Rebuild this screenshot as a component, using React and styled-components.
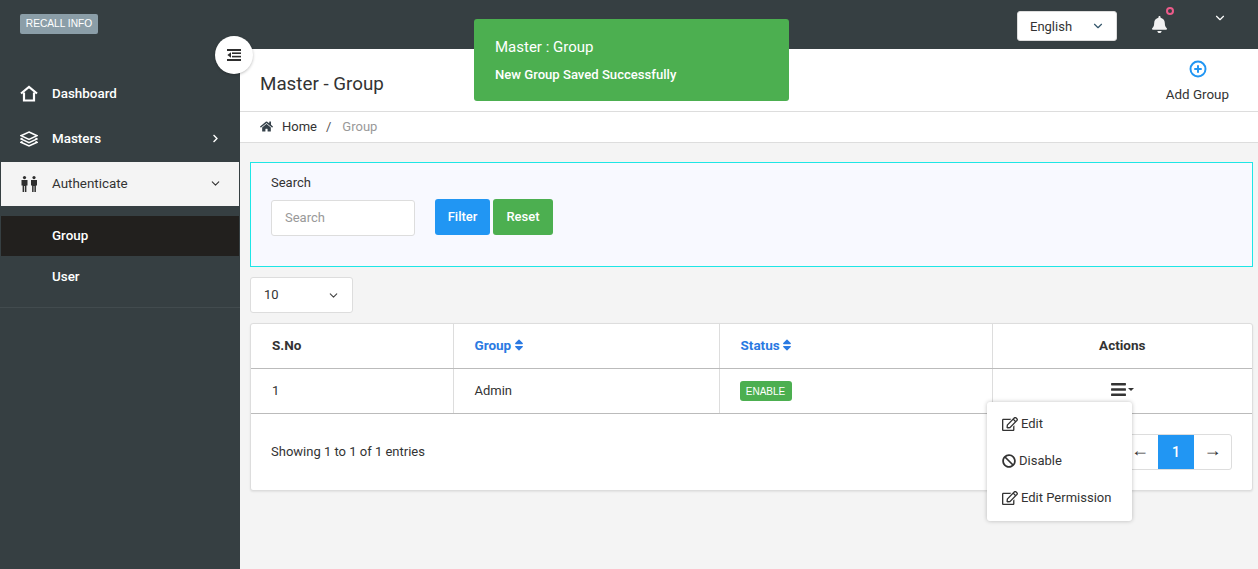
import styled, { createGlobalStyle } from "styled-components"
import { FaBan, FaBars, FaBell, FaChevronRight, FaHome, FaRegEdit, FaSort } from "react-icons/fa"
import { FiChevronDown, FiPlusCircle } from "react-icons/fi"

const HomeIcon = () => (
    <svg width="18" height="17" viewBox="0 0 18 17" fill="none" stroke="#fff" strokeWidth="2.2">
        <path d="M1 8.5 9 2l8 6.5" />
        <path d="M4 7.5V15.5H14V7.5" />
    </svg>
)

const LayersIcon = () => (
    <svg width="18" height="16" viewBox="0 0 18 16" fill="none" stroke="#fff" strokeWidth="1.5">
        <path d="M9 1 17 4.7 9 8.4 1 4.7Z" />
        <path d="M2.5 7.2 1 8 9 11.7 17 8 15.5 7.2" />
        <path d="M2.5 10.5 1 11.3 9 15 17 11.3 15.5 10.5" />
    </svg>
)

const PeopleIcon = () => (
    <svg width="17" height="16" viewBox="0 0 17 16" fill="#2e2e2e">
        <circle cx="3.5" cy="1.6" r="1.6" />
        <path d="M0.5 4H6.5V9.5H5.4V16H3.9V10H3.1V16H1.6V9.5H0.5Z" />
        <circle cx="13" cy="1.6" r="1.6" />
        <path d="M10 4H16V9.5H14.9V16H13.4V10H12.6V16H11.1V9.5H10Z" />
    </svg>
)

const CollapseIcon = () => (
    <svg width="14" height="12" viewBox="0 0 14 12" fill="#2e2e2e">
        <rect x="0" y="0" width="14" height="2" />
        <rect x="5" y="3.4" width="9" height="1.6" />
        <rect x="5" y="6.8" width="9" height="1.6" />
        <rect x="0" y="10" width="14" height="2" />
        <path d="M4 3.2V8.8L0.4 6Z" />
    </svg>
)

const App = () => {
    return (
        <Page>
            <GlobalStyle />
            <Sidebar>
                <Brand>
                    <BrandTag>RECALL INFO</BrandTag>
                </Brand>
                <Nav>
                    <NavItem>
                        <NavIcon><HomeIcon /></NavIcon>
                        Dashboard
                    </NavItem>
                    <NavItem>
                        <NavIcon><LayersIcon /></NavIcon>
                        Masters
                        <NavArrow><FaChevronRight size={9} /></NavArrow>
                    </NavItem>
                    <NavItem $open>
                        <NavIcon><PeopleIcon /></NavIcon>
                        Authenticate
                        <NavArrow $open><FiChevronDown size={13} /></NavArrow>
                    </NavItem>
                    <SubNav>
                        <SubItem $active>Group</SubItem>
                        <SubItem>User</SubItem>
                    </SubNav>
                </Nav>
            </Sidebar>

            <Main>
                <TopBar>
                    <LangSelect>
                        English
                        <FiChevronDown size={14} color="#34566b" />
                    </LangSelect>
                    <BellWrap>
                        <FaBell size={17} color="#f1f1f1" />
                        <BellDot />
                    </BellWrap>
                    <UserCaret><FiChevronDown size={14} color="#fff" /></UserCaret>
                </TopBar>

                <PageHead>
                    <PageTitle>Master - Group</PageTitle>
                    <AddLink>
                        <FiPlusCircle size={18} color="#2196f3" strokeWidth={2.6} />
                        <span>Add Group</span>
                    </AddLink>
                </PageHead>

                <Breadcrumb>
                    <FaHome size={13} color="#36424a" />
                    <span>Home</span>
                    <span className="sep">/</span>
                    <span className="current">Group</span>
                </Breadcrumb>

                <Content>
                    <FilterCard>
                        <Field>
                            <label>Search</label>
                            <SearchInput placeholder="Search" />
                        </Field>
                        <Btn $bg="#2196f3" $w="55px">Filter</Btn>
                        <Btn $bg="#4caf50" $w="60px">Reset</Btn>
                    </FilterCard>

                    <PageSize>
                        <span>10</span>
                        <FiChevronDown size={13} color="#444" />
                    </PageSize>

                    <TableCard>
                        <Table>
                            <colgroup>
                                <col style={{ width: 202 }} />
                                <col style={{ width: 266 }} />
                                <col style={{ width: 273 }} />
                                <col />
                            </colgroup>
                            <thead>
                                <tr>
                                    <Th>S.No</Th>
                                    <Th $link>Group <FaSort size={14} /></Th>
                                    <Th $link>Status <FaSort size={14} /></Th>
                                    <Th $center>Actions</Th>
                                </tr>
                            </thead>
                            <tbody>
                                <tr>
                                    <Td>1</Td>
                                    <Td>Admin</Td>
                                    <Td><Badge>ENABLE</Badge></Td>
                                    <Td $center>
                                        <ActionToggle>
                                            <FaBars size={17} />
                                            <Caret />
                                        </ActionToggle>
                                    </Td>
                                </tr>
                            </tbody>
                        </Table>
                        <TableFoot>
                            <span>Showing 1 to 1 of 1 entries</span>
                            <Pager>
                                <PageBtn>←</PageBtn>
                                <PageBtn $active>1</PageBtn>
                                <PageBtn>→</PageBtn>
                            </Pager>
                        </TableFoot>
                    </TableCard>
                </Content>
            </Main>

            <ToggleBtn><CollapseIcon /></ToggleBtn>

            <Toast>
                <h4>Master : Group</h4>
                <p>New Group Saved Successfully</p>
            </Toast>

            <ActionMenu>
                <MenuItem><FaRegEdit size={16} /> Edit</MenuItem>
                <MenuItem><FaBan size={14} /> Disable</MenuItem>
                <MenuItem><FaRegEdit size={16} /> Edit Permission</MenuItem>
            </ActionMenu>
        </Page>
    )
}

export default App

const GlobalStyle = createGlobalStyle`
    html, body {
        margin: 0;
        padding: 0;
        height: 100%;
        overflow: hidden;
    }

    body {
        font-family: Roboto, "Liberation Sans", Arial, sans-serif;
        font-size: 13px;
        color: #333;
        background: #f4f4f4;
    }

    * {
        box-sizing: border-box;
    }
`

const Page = styled.div`
    position: relative;
    display: flex;
    width: 1258px;
    height: 569px;
    overflow: hidden;
`

const Sidebar = styled.aside`
    flex: 0 0 240px;
    background: #363f42;
`

const Brand = styled.div`
    height: 71px;
    padding: 14px 20px 0;
`

const BrandTag = styled.div`
    display: inline-block;
    width: 78px;
    height: 20px;
    line-height: 20px;
    text-align: center;
    font-family: "Liberation Sans", Arial, sans-serif;
    font-size: 10.2px;
    color: #fff;
    background: #8b9ea8;
    border-radius: 2px;
`

const Nav = styled.nav`
    display: flex;
    flex-direction: column;
    border-bottom: 1px solid #424b4e;
    padding-bottom: 9px;
`

const NavItem = styled.div`
    display: flex;
    align-items: center;
    height: ${(p) => (p.$open ? "44px" : "45px")};
    margin: ${(p) => (p.$open ? "1px 1px 0" : "0 1px")};
    padding-left: 19px;
    padding-bottom: ${(p) => (p.$open ? "1px" : "0")};
    font-size: 13.4px;
    font-weight: ${(p) => (p.$open ? 400 : 500)};
    color: ${(p) => (p.$open ? "#333" : "#fff")};
    background: ${(p) => (p.$open ? "#f4f4f4" : "transparent")};
`

const NavIcon = styled.span`
    display: flex;
    justify-content: center;
    align-items: center;
    width: 18px;
    margin-right: 14px;
`

const NavArrow = styled.span`
    display: flex;
    margin-left: auto;
    margin-right: ${(p) => (p.$open ? "17px" : "19px")};
`

const SubNav = styled.div`
    display: flex;
    flex-direction: column;
    margin-top: 10px;
`

const SubItem = styled.div`
    display: flex;
    align-items: center;
    height: 40px;
    margin: 0 1px 1px;
    padding-left: 51px;
    padding-bottom: 2px;
    font-size: 13.4px;
    font-weight: 500;
    color: #fff;
    background: ${(p) => (p.$active ? "#22201e" : "transparent")};
`

const Main = styled.main`
    flex: 1;
    display: flex;
    flex-direction: column;
    min-width: 0;
`

const TopBar = styled.header`
    display: flex;
    align-items: center;
    justify-content: flex-end;
    height: 49px;
    background: #363f42;
    padding: 3px 31px 0 0;
`

const LangSelect = styled.div`
    display: flex;
    align-items: center;
    justify-content: space-between;
    width: 100px;
    height: 30px;
    margin-right: 1px;
    padding: 0 11px 0 12px;
    color: #333;
    background: #fff;
    border: 1px solid #ddd;
    border-radius: 3px;
`

const BellWrap = styled.div`
    position: relative;
    display: flex;
    margin-left: 33px;
    margin-bottom: 4px;
`

const BellDot = styled.span`
    position: absolute;
    top: -9px;
    left: 15px;
    width: 8px;
    height: 8px;
    border: 2px solid #ec5b8a;
    border-radius: 50%;
`

const UserCaret = styled.div`
    display: flex;
    margin-left: 45px;
    margin-bottom: 16px;
`

const PageHead = styled.div`
    display: flex;
    justify-content: space-between;
    align-items: center;
    height: 63px;
    padding: 0 29px 0 20px;
    background: #fff;
    border-bottom: 1px solid #ddd;
`

const PageTitle = styled.h1`
    margin: 8px 0 0;
    font-size: 18.8px;
    font-weight: 400;
    color: #333;
`

const AddLink = styled.div`
    display: flex;
    flex-direction: column;
    align-items: center;
    gap: 9px;
    margin-top: 2px;
    font-size: 13.4px;
    color: #333;

    svg {
        margin-left: 1px;
    }
`

const Breadcrumb = styled.div`
    display: flex;
    align-items: center;
    gap: 9px;
    height: 31px;
    padding-left: 20px;
    padding-bottom: 2px;
    color: #333;
    background: #fff;
    border-bottom: 1px solid #ddd;

    .sep {
        color: #555;
    }

    .current {
        margin-left: 2px;
        color: #999;
    }
`

const Content = styled.div`
    flex: 1;
    display: flex;
    flex-direction: column;
    padding: 19px 5px 0 10px;
`

const FilterCard = styled.section`
    display: flex;
    align-items: flex-start;
    height: 105px;
    padding: 12px 20px;
    background: #f8f9ff;
    border: 1px solid #1ee6e6;
`

const Field = styled.div`
    display: flex;
    flex-direction: column;
    gap: 10px;
    width: 144px;
    margin-right: 20px;

    label {
        color: #333;
    }
`

const SearchInput = styled.input`
    width: 144px;
    height: 36px;
    padding: 0 13px 2px;
    font: inherit;
    color: #333;
    background: #fff;
    border: 1px solid #ddd;
    border-radius: 3px;
    outline: none;

    &::placeholder {
        color: #999;
    }
`

const Btn = styled.button`
    width: ${(p) => p.$w};
    height: 36px;
    margin-top: 24px;
    margin-right: 3px;
    padding: 0 0 2px;
    font: inherit;
    font-weight: 500;
    color: #fff;
    background: ${(p) => p.$bg};
    border: 0;
    border-radius: 3px;
`

const PageSize = styled.div`
    display: flex;
    align-items: center;
    justify-content: space-between;
    width: 103px;
    height: 36px;
    margin-top: 10px;
    padding: 0 12px 0 13px;
    color: #333;
    background: #fff;
    border: 1px solid #ddd;
    border-radius: 3px;

    span {
        margin-top: -2px;
    }
`

const TableCard = styled.section`
    height: 168px;
    margin-top: 10px;
    background: #fff;
    border: 1px solid #ddd;
    border-radius: 3px;
    box-shadow: 0 1px 2px rgba(0, 0, 0, 0.08);
`

const Table = styled.table`
    width: 100%;
    table-layout: fixed;
    border-collapse: collapse;
`

const Th = styled.th`
    height: 44px;
    padding: 0 21px 2px;
    font-size: 13.5px;
    font-weight: 700;
    text-align: ${(p) => (p.$center ? "center" : "left")};
    color: ${(p) => (p.$link ? "#2a7ae2" : "#333")};
    border-bottom: 1px solid #bbb;
    border-left: 1px solid #ddd;

    &:first-child {
        border-left: 0;
    }

    svg {
        margin-left: -3px;
        vertical-align: -2px;
    }
`

const Td = styled.td`
    height: 45px;
    padding: 0 21px;
    text-align: ${(p) => (p.$center ? "center" : "left")};
    color: #333;
    border-bottom: 1px solid #bbb;
    border-left: 1px solid #ddd;

    &:first-child {
        border-left: 0;
    }
`

const Badge = styled.span`
    display: inline-block;
    width: 52px;
    height: 20px;
    margin-left: -1px;
    line-height: 21px;
    text-align: center;
    font-family: "Liberation Sans", Arial, sans-serif;
    font-size: 10px;
    color: #fff;
    background: #4caf50;
    border-radius: 3px;
`

const ActionToggle = styled.span`
    display: inline-flex;
    align-items: center;
    gap: 1px;
    color: #333;
`

const Caret = styled.i`
    width: 0;
    height: 0;
    border-left: 3px solid transparent;
    border-right: 3px solid transparent;
    border-top: 3px solid #333;
`

const TableFoot = styled.div`
    display: flex;
    align-items: center;
    justify-content: space-between;
    height: 76px;
    padding: 0 20px 0 20px;
`

const Pager = styled.div`
    display: flex;
    height: 36px;
    background: #fff;
    border: 1px solid #ddd;
    border-radius: 3px;
`

const PageBtn = styled.span`
    display: flex;
    align-items: center;
    justify-content: center;
    width: 36px;
    padding-bottom: ${(p) => (p.$active ? "0" : "2px")};
    font-family: ${(p) => (p.$active ? "inherit" : '"Liberation Sans", Arial, sans-serif')};
    font-size: ${(p) => (p.$active ? "14px" : "18px")};
    font-weight: ${(p) => (p.$active ? 500 : 400)};
    color: ${(p) => (p.$active ? "#fff" : "#333")};
    background: ${(p) => (p.$active ? "#2196f3" : "transparent")};

    &:last-child {
        width: 37px;
    }
`

const ToggleBtn = styled.div`
    position: absolute;
    top: 36px;
    left: 215px;
    display: flex;
    align-items: center;
    justify-content: center;
    width: 38px;
    height: 38px;
    background: #fff;
    border-radius: 50%;
    box-shadow: 0 1px 3px rgba(0, 0, 0, 0.25);
`

const Toast = styled.div`
    position: absolute;
    top: 19px;
    left: 474px;
    width: 315px;
    height: 82px;
    padding: 19px 21px;
    color: #fff;
    background: #4caf50;
    border-radius: 3px;

    h4 {
        margin: 0 0 11px;
        font-size: 15px;
        font-weight: 400;
    }

    p {
        margin: 0;
        font-size: 13.1px;
        font-weight: 500;
    }
`

const ActionMenu = styled.div`
    position: absolute;
    top: 402px;
    left: 987px;
    display: flex;
    flex-direction: column;
    width: 145px;
    height: 119px;
    padding: 3px 0;
    background: #fff;
    border-radius: 3px;
    box-shadow: 0 0 4px rgba(0, 0, 0, 0.25);
`

const MenuItem = styled.div`
    display: flex;
    align-items: center;
    gap: 3px;
    height: 37px;
    padding-left: 15px;
    color: #333;
`
